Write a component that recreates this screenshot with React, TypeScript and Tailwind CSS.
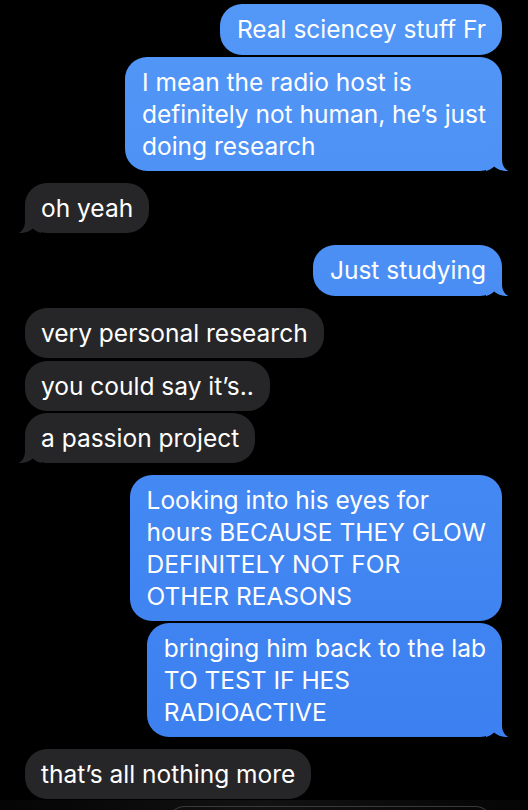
import React from "react";

type Msg = { text: React.ReactNode; me: boolean; tail?: boolean; mt: number; tall?: boolean };

const msgs: Msg[] = [
  { text: "Real sciencey stuff Fr", me: true, mt: 4, tall: true },
  {
    text: (
      <>
        I mean the radio host is
        <br />
        definitely not human, he’s just
        <br />
        doing research
      </>
    ),
    me: true,
    tail: true,
    mt: 2,
  },
  { text: "oh yeah", me: false, tail: true, mt: 12 },
  { text: "Just studying", me: true, tail: true, mt: 12, tall: true },
  { text: "very personal research", me: false, mt: 12 },
  { text: "you could say it’s..", me: false, mt: 3 },
  { text: "a passion project", me: false, tail: true, mt: 2 },
  {
    text: (
      <>
        Looking into his eyes for
        <br />
        hours BECAUSE THEY GLOW
        <br />
        DEFINITELY NOT FOR
        <br />
        OTHER REASONS
      </>
    ),
    me: true,
    mt: 12,
  },
  {
    text: (
      <>
        bringing him back to the lab
        <br />
        TO TEST IF HES
        <br />
        RADIOACTIVE
      </>
    ),
    me: true,
    tail: true,
    mt: 2,
  },
  { text: "that’s all nothing more", me: false, mt: 12 },
];

function TailRight({ color }: { color: string }) {
  return (
    <svg
      className="absolute right-[-8px] bottom-0"
      width="24"
      height="24"
      viewBox="0 0 24 24"
    >
      <path
        d="M0 0 H16 V12 C16 18 18.5 22 22.5 24 C18 24.4 12 23 8 19.5 C6 21.5 3 23.5 0 24 Z"
        fill={color}
      />
    </svg>
  );
}

function TailLeft({ color }: { color: string }) {
  return (
    <svg
      className="absolute left-[-8px] bottom-0"
      width="24"
      height="24"
      viewBox="0 0 24 24"
    >
      <path
        d="M24 0 H8 V12 C8 18 5.5 22 1.5 24 C6 24.4 12 23 16 19.5 C18 21.5 21 23.5 24 24 Z"
        fill={color}
      />
    </svg>
  );
}

function colorAt(y: number) {
  const t = Math.min(1, Math.max(0, y / 810));
  const a = [0x53, 0x97, 0xf7];
  const b = [0x3a, 0x7e, 0xf0];
  const c = a.map((v, i) => Math.round(v + (b[i] - v) * t));
  return `rgb(${c[0]},${c[1]},${c[2]})`;
}

const tailY: Record<number, number> = { 1: 165, 3: 290, 8: 730 };

export default function App() {
  return (
    <div className="w-[528px] h-[810px] bg-black overflow-hidden flex flex-col font-['Inter','Liberation_Sans',sans-serif]">
      <div className="flex flex-col pl-[25px] pr-[26px]">
        {msgs.map((m, i) => (
          <div
            key={i}
            className={m.me ? "flex justify-end" : "flex justify-start"}
            style={{ marginTop: m.mt }}
          >
            <div
              className={
                (m.tall ? "pt-[9px] pb-[10px] " : "py-[9px] ") +
                (m.me
                  ? "relative rounded-[22px] pl-[17px] pr-[16px] text-[24.5px] leading-[32px] text-white whitespace-nowrap bg-linear-to-b from-[#5397f7] to-[#3a7ef0] bg-fixed"
                  : "relative rounded-[22px] pl-[16px] pr-[16px] text-[24.5px] leading-[32px] text-white whitespace-nowrap bg-[#262628]")
              }
            >
              {m.text}
              {m.tail && m.me && <TailRight color={colorAt(tailY[i] ?? 400)} />}
              {m.tail && !m.me && <TailLeft color="#262628" />}
            </div>
          </div>
        ))}
      </div>
      <div className="mt-[1px] h-[20px] shrink-0 bg-linear-to-r from-[#050505] via-[#121212] to-[#050505] pt-[6px] flex">
        <div className="ml-[167px] w-[326px] h-[20px] rounded-t-[18px] border-t border-l border-r border-[#3a3a3c]" />
      </div>
    </div>
  );
}
